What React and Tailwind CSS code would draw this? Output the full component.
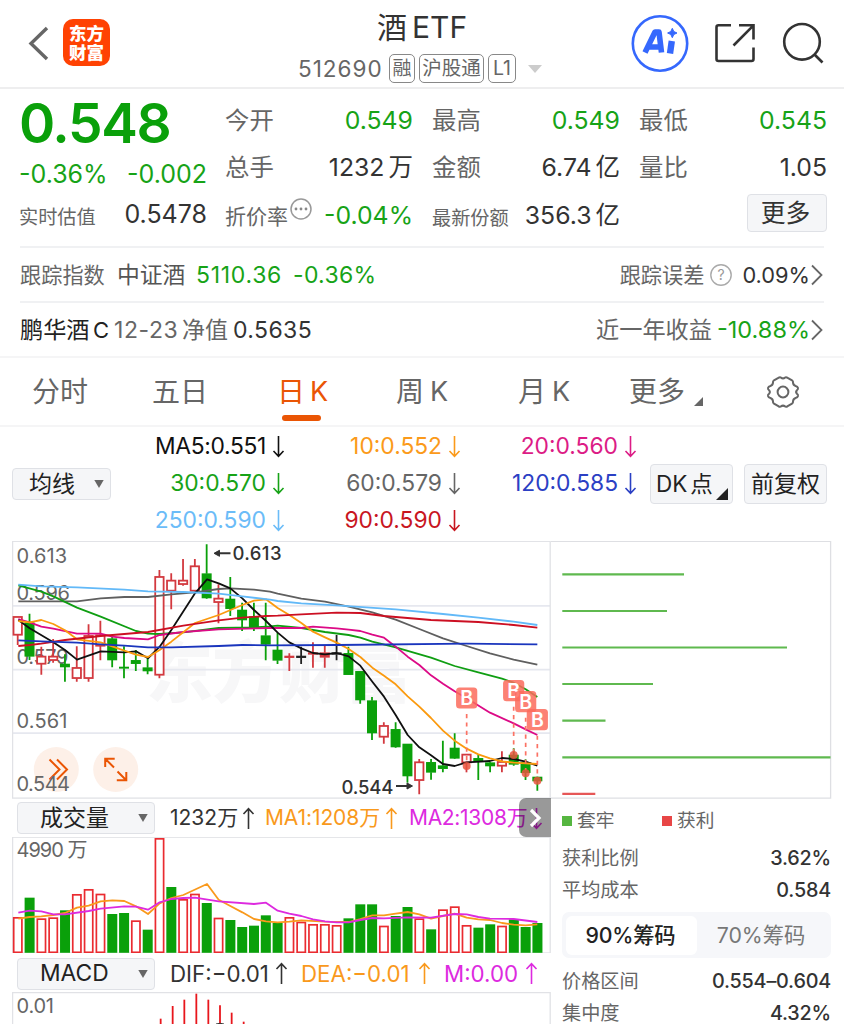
import React from "react";

const GREEN = "#0aa00a";
const RED = "#d3393f";

// i-th candle centre
const cx = (i) => 17.7 + 11.81 * i;
// chart coordinates are recorded on a 3x grid
const py = (v) => 535 + v / 3;
const vy = (v) => 795 + v / 3;

// [kind, high, bodyTop, bodyBottom, low]
const CANDLES = [
  ["r", 245, 245, 300, 330], ["g", 236, 263, 364, 375], ["r", 335, 364, 387, 419],
  ["r", 312, 364, 376, 383], ["g", 358, 387, 396, 440], ["r", 334, 398, 430, 440],
  ["r", 268, 302, 430, 440], ["r", 257, 300, 333, 376], ["g", 305, 311, 375, 397],
  ["g", 334, 396, 400, 430], ["g", 345, 376, 386, 408], ["g", 370, 398, 408, 418],
  ["r", 105, 125, 420, 430], ["r", 115, 136, 168, 223], ["r", 72, 136, 148, 152],
  ["r", 72, 93, 168, 170], ["g", 28, 116, 189, 191], ["r", 148, 190, 202, 265],
  ["g", 126, 192, 221, 243], ["g", 203, 225, 255, 288], ["g", 203, 245, 277, 288],
  ["g", 203, 302, 328, 376], ["g", 293, 345, 376, 387], ["c", 355, 363, 368, 408],
  ["k", 335, 363, 368, 387], ["c", 322, 353, 358, 398], ["c", 333, 353, 367, 398],
  ["k", 300, 353, 358, 376], ["g", 335, 355, 419, 420], ["g", 408, 409, 495, 506],
  ["g", 486, 497, 594, 615], ["r", 562, 572, 606, 626], ["g", 562, 583, 636, 638],
  ["g", 627, 627, 723, 743], ["r", 672, 681, 736, 778], ["g", 672, 682, 712, 734],
  ["g", 617, 692, 701, 712], ["g", 595, 639, 670, 672], ["r", 658, 658, 683, 712],
  ["g", 660, 670, 680, 735], ["g", 680, 683, 693, 712], ["r", 649, 680, 693, 712],
  ["g", 640, 660, 688, 692], ["g", 673, 682, 713, 735], ["g", 725, 726, 738, 767],
];

// Each line: points of the left part, then points of the right part (offset 270px)
const LINES = [
  ["#5f5f5f", [[55,199],[231,199],[302,190],[373,186],[444,186],[514,178],[585,172],[656,162],[691,160],[762,164],[810,170]], [[23,176],[94,191],[165,200],[236,215],[307,232],[377,254],[448,282],[519,310],[590,333],[660,355],[731,374],[802,389]]],
  ["#0f9e12", [[55,151],[124,170],[160,184],[231,218],[302,245],[408,288],[444,296],[479,297],[550,292],[656,279],[762,277],[810,274]], [[23,272],[94,279],[165,291],[236,300],[271,308],[307,320],[377,337],[483,368],[554,393],[625,412],[696,431],[731,443],[767,463],[802,486]]],
  ["#dc0a86", [[55,252],[89,262],[124,275],[160,281],[231,296],[302,296],[337,305],[373,309],[444,313],[479,300],[550,291],[656,283],[810,279]], [[94,279],[129,275],[200,280],[236,284],[271,288],[307,299],[342,308],[377,335],[413,365],[448,390],[483,421],[519,446],[554,469],[590,490],[660,533],[731,565],[767,583],[802,600]]],
  ["#101010", [[55,255],[89,280],[160,322],[195,345],[231,374],[302,349],[373,352],[408,349],[444,370],[479,335],[514,285],[585,175],[621,133],[656,145],[691,160],[727,190],[762,225],[798,258]], [[23,293],[58,322],[94,340],[129,354],[165,358],[200,354],[236,364],[271,392],[307,440],[342,485],[377,540],[413,600],[448,637],[483,661],[519,687],[554,693],[590,682],[660,678],[696,669],[731,672],[767,680],[802,692]]],
  ["#fb9a0e", [[55,258],[89,262],[124,255],[160,267],[195,286],[231,313],[302,322],[373,347],[408,359],[444,366],[479,345],[514,320],[585,264],[656,240],[727,210],[762,197],[798,193]], [[23,219],[58,240],[94,264],[129,290],[165,307],[200,323],[236,342],[271,366],[307,398],[342,422],[377,448],[413,484],[448,515],[483,549],[519,587],[554,617],[590,641],[625,658],[660,670],[696,679],[731,683],[802,687]]],
  ["#cc0f22", [[55,333],[89,330],[124,326],[195,315],[302,303],[444,291],[550,272],[656,256],[727,248],[798,243]], [[23,242],[94,238],[200,233],[271,234],[342,243],[483,255],[625,261],[731,270],[802,278]]],
  ["#1a35bd", [[55,316],[124,319],[231,323],[302,328],[373,332],[444,337],[514,337],[656,333],[727,330],[810,331]], [[200,330],[590,326],[802,328]]],
  ["#62b9f8", [[55,149],[124,154],[231,157],[373,164],[444,169],[550,171],[656,176],[727,184],[810,194]], [[23,198],[94,205],[200,211],[377,223],[519,237],[625,248],[731,260],[802,270]]],
];

const VOLS = "r367 g308 r371 r368 g346 r298 r283 r297 g357 g354 r377 g404 r130 g276 r313 r297 g324 r369 g375 g396 g392 g361 g384 r367 r381 r388 r388 r391 g370 g328 g328 r393 g363 g336 r371 g403 r344 r335 r391 g398 g388 r393 g373 g396 g384".split(" ");

const VOL_LINES = [
  ["#f9991c", [[55,371],[89,366],[124,364],[160,360],[195,354],[231,338],[266,332],[302,319],[337,316],[373,318],[408,334],[444,357],[479,325],[514,309],[550,300],[621,267],[656,314],[691,333],[727,352],[762,372],[798,379]], [[23,382],[58,380],[94,376],[165,380],[236,381],[271,372],[307,361],[342,361],[377,356],[413,351],[448,358],[483,371],[519,363],[554,356],[590,368],[625,373],[660,375],[696,384],[731,389],[767,391],[802,388]]],
  ["#dd2adf", [[55,353],[89,347],[124,349],[160,358],[195,358],[266,348],[302,341],[373,334],[408,335],[444,344],[479,322],[514,312],[550,309],[585,308],[656,319],[762,327],[798,323]], [[23,347],[58,356],[94,363],[129,373],[165,379],[200,382],[236,382],[271,375],[307,369],[342,370],[413,367],[483,368],[554,357],[590,358],[625,366],[660,371],[731,372],[802,381]]],
];

const MACD_BARS = [[482, 671], [518, 633], [553, 614], [589, 596], [625, 614], [660, 631], [695, 653], [731, 680]];
const BUYS = [[590, 489, 693], [731, 467, 660], [767, 500, 715], [802, 554, 737]];

const toPoints = (a, b, y) =>
  [...a.map(([x, v]) => [x / 3, y(v)]), ...b.map(([x, v]) => [270 + x / 3, y(v)])]
    .map((p) => p.join(","))
    .join(" ");

function Arrow({ up = false, className = "" }) {
  return (
    <svg width="13" height="23" viewBox="0 0 13 23" className={`shrink-0 ${className}`} fill="none" stroke="currentColor" strokeWidth="1.6">
      <path d={up ? "M6.5 22V1.5M1.5 7l5-5.3 5 5.3" : "M6.5 1v20.5M1.5 16l5 5.3 5-5.3"} />
    </svg>
  );
}

function Chevron() {
  return (
    <svg width="14" height="22" viewBox="0 0 14 22" className="shrink-0" fill="none" stroke="#666" strokeWidth="1.8">
      <path d="M2 1.5l9.5 9.5L2 20.5" />
    </svg>
  );
}

function Caret({ className = "" }) {
  return (
    <svg width="10" height="8" viewBox="0 0 10 8" className={className}>
      <path d="M0.3 0h9.4L5 8z" fill="#666" />
    </svg>
  );
}

function Header() {
  return (
    <header className="flex h-[89px] items-start border-b-2 border-[#eeeeef]">
      <svg width="24" height="38" viewBox="0 0 24 38" className="ml-[26px] mt-[24px] shrink-0" fill="none" stroke="#666" strokeWidth="3.4">
        <path d="M21 4L5 19.5 21 35" />
      </svg>
      <div className="ml-[13px] mt-[19px] flex h-[47px] w-[47px] shrink-0 flex-col items-center justify-center rounded-[10px] bg-[#ff4203] text-[17.5px] font-black leading-[19px] text-white">
        <span>东方</span>
        <span>财富</span>
      </div>
      <div className="ml-[188px] flex w-[246px] shrink-0 flex-col">
        <div className="mt-[7px] flex h-[40px] items-center pl-[79px] text-[30px] leading-[40px] text-[#333]">
          <span>酒</span>
          <span className="ml-[5px]">ETF</span>
        </div>
        <div className="mt-[7px] flex h-[29px] items-center text-[#666]">
          <span className="w-[91px] text-[22.5px] leading-[29px] tracking-[1px]">512690</span>
          <span className="flex h-[29px] w-[26px] items-center justify-center rounded-[5px] border-[1.5px] border-[#888] text-[19px] leading-none">融</span>
          <span className="ml-[4px] flex h-[29px] w-[65px] items-center justify-center whitespace-nowrap rounded-[5px] border-[1.5px] border-[#888] text-[19.5px] leading-none">沪股通</span>
          <span className="ml-[4px] flex h-[29px] w-[28px] items-center justify-center rounded-[5px] border-[1.5px] border-[#888] text-[19.5px] leading-none">L1</span>
          <svg width="14" height="8" viewBox="0 0 14 8" className="ml-[12px]">
            <path d="M0 0h14L7 8z" fill="#ccc" />
          </svg>
        </div>
      </div>
      <svg width="58" height="58" viewBox="0 0 58 58" className="ml-[87px] mt-[14px] shrink-0">
        <circle cx="29" cy="29.5" r="27.2" fill="none" stroke="#3568fd" strokeWidth="2.6" />
        <g fill="none" stroke="#3568fd" strokeLinejoin="round">
          <path d="M14 38.5L24 18h4l2.5 20.5M18 33h11" strokeWidth="5.6" />
          <path d="M40.8 27l-1.8 12.5" strokeWidth="6.4" />
        </g>
        <path d="M41.3 14.3l1.5 3.2 3.2 1.5-3.2 1.5-1.5 3.2-1.5-3.2-3.2-1.5 3.2-1.5z" fill="#3568fd" stroke="#3568fd" />
      </svg>
      <svg width="42" height="42" viewBox="0 0 42 42" className="ml-[25px] mt-[22px] shrink-0" fill="none" stroke="#333" strokeWidth="2.6">
        <path d="M17 3.3H4.5a2 2 0 0 0-2 2V37a2 2 0 0 0 2 2h33a2 2 0 0 0 2-2V25.5" />
        <path d="M25 3.3h14.5v14.2M39 3.8L19.5 23.5" />
      </svg>
      <svg width="44" height="44" viewBox="0 0 44 44" className="ml-[25px] mt-[21px] shrink-0" fill="none" stroke="#333" strokeWidth="2.6">
        <circle cx="21" cy="20.8" r="17.8" />
        <path d="M33.5 33.5l8 8" />
      </svg>
    </header>
  );
}

function Cell({ label, value, unit, valueClass = "text-[#333]", labelClass = "text-[24.4px]", extra }) {
  return (
    <div className="flex items-center justify-between whitespace-nowrap leading-[30px]">
      <span className={`flex text-[#666] ${labelClass}`}>
        {label}
        {extra}
      </span>
      <span className={`flex gap-[4px] text-[24.8px] ${valueClass}`}>
        {value}
        {unit && <span className="text-[24.5px]">{unit}</span>}
      </span>
    </div>
  );
}

function Quote() {
  return (
    <section className="ml-[19px] flex h-[157px] w-[808px]">
      <div className="w-[188px] shrink-0 whitespace-nowrap">
        <div className="h-[68px] text-[55px] font-semibold leading-[68px] tracking-[-1.4px] text-[#0aa00a]">0.548</div>
        <div className="flex h-[34px] justify-between text-[25px] leading-[34px] text-[#17a317]">
          <span>-0.36%</span>
          <span>-0.002</span>
        </div>
        <div className="flex h-[47px] items-center justify-between">
          <span className="pt-[5px] text-[19.2px] text-[#666]">实时估值</span>
          <span className="text-[25px] text-[#333]">0.5478</span>
        </div>
      </div>
      <div className="ml-[18px] grid h-[150px] grow grid-cols-[188px_188px_188px] grid-rows-3 gap-x-[19px] pt-[7px]">
        <Cell label="今开" value="0.549" valueClass="text-[#17a317]" />
        <Cell label="最高" value="0.549" valueClass="text-[#17a317]" />
        <Cell label="最低" value="0.545" valueClass="text-[#17a317]" />
        <Cell label="总手" value="1232" unit="万" />
        <Cell label="金额" value="6.74" unit="亿" />
        <Cell label="量比" value="1.05" />
        <Cell
          label="折价率"
          labelClass="text-[21px] pt-[3px]"
          value="-0.04%"
          valueClass="text-[#17a317]"
          extra={
            <svg width="22" height="22" viewBox="0 0 22 22" className="mt-[-4px] ml-[2px]">
              <circle cx="11" cy="11" r="10" fill="none" stroke="#999" strokeWidth="1.5" />
              <g fill="#888">
                <circle cx="6" cy="11" r="1.4" />
                <circle cx="11" cy="11" r="1.4" />
                <circle cx="16" cy="11" r="1.4" />
              </g>
            </svg>
          }
        />
        <Cell label="最新份额" labelClass="text-[19.2px] pt-[5px]" value="356.3" unit="亿" />
        <div className="flex items-center justify-end">
          <button className="mt-[-4px] h-[38px] w-[80px] rounded-[4px] border-[1.5px] border-[#dfe1e6] bg-[#f5f6f8] pr-[3px] text-[24.8px] leading-none text-[#333]">更多</button>
        </div>
      </div>
    </section>
  );
}

function InfoRows() {
  return (
    <>
      <div className="ml-[20px] flex h-[57px] w-[804px] items-center whitespace-nowrap border-y-2 border-[#f0f1f3] text-[23px] leading-[30px]">
        <span className="w-[97px] text-[21.2px] text-[#666]">跟踪指数</span>
        <span className="w-[79px] text-[22.8px] text-[#555]">中证酒</span>
        <span className="w-[97px] tracking-[0.7px] text-[#17a317]">5110.36</span>
        <span className="tracking-[0.3px] text-[#17a317]">-0.36%</span>
        <span className="ml-auto text-[21.2px] text-[#666]">跟踪误差</span>
        <svg width="24" height="24" viewBox="0 0 24 24" className="ml-[5px]">
          <circle cx="12" cy="12" r="10.2" fill="none" stroke="#aaa" strokeWidth="1.4" />
          <text x="12" y="17" textAnchor="middle" fontSize="14" fill="#999" fontFamily="Inter">?</text>
        </svg>
        <span className="ml-[9px] text-[21.8px] text-[#333]">0.09%</span>
        <Chevron />
      </div>
      <div className="ml-[20px] flex h-[53px] w-[804px] items-center whitespace-nowrap text-[23px] leading-[30px]">
        <span className="w-[73px] text-[23.2px] text-[#222]">鹏华酒</span>
        <span className="w-[21px] text-[22px] text-[#222]">C</span>
        <span className="w-[68px] tracking-[0.6px] text-[#666]">12-23</span>
        <span className="w-[51px] text-[23px] text-[#666]">净值</span>
        <span className="tracking-[0.4px] text-[#333]">0.5635</span>
        <span className="ml-auto text-[23.2px] text-[#666]">近一年收益</span>
        <span className="ml-[5px] text-[23.5px] text-[#17a317]">-10.88%</span>
        <Chevron />
      </div>
    </>
  );
}

function Tabs() {
  const base = "flex items-center gap-[6px] whitespace-nowrap";
  return (
    <nav className="flex h-[71px] items-center border-y-2 border-[#f5f5f6] text-[28px] leading-[40px] text-[#666]">
      <span className={`${base} ml-[32px] w-[120px]`}>分时</span>
      <span className={`${base} w-[125px]`}>五日</span>
      <span className="relative flex w-[119px] items-center gap-[5px] text-[#ea5504]">
        日<span className="text-[27px]">K</span>
        <i className="absolute left-[5px] top-[43px] h-[6px] w-[39px] rounded-[3px] bg-[#ea5504]" />
      </span>
      <span className={`${base} w-[122px]`}>周<span className="text-[27px]">K</span></span>
      <span className={`${base} w-[111px]`}>月<span className="text-[27px]">K</span></span>
      <span className={`${base} w-[137px]`}>
        更多
        <svg width="9" height="9" viewBox="0 0 9 9" className="ml-[3px] mt-[19px]"><path d="M9 0v9H0z" fill="#666" /></svg>
      </span>
      <svg width="34" height="34" viewBox="0 0 34 34" fill="none" stroke="#666" strokeWidth="2">
        <path d="M12.3 2.9Q14 1.6 15 2.6Q17 4.2 19 2.6Q20 1.6 21.7 2.9L26 5.3Q27.3 6.2 27 7.6Q27.2 10.2 29.6 11Q31.6 11.4 32 13Q32.2 14.4 31 15.2Q29.2 17 31 18.8Q32.2 19.6 32 21Q31.6 22.6 29.6 23Q27.2 23.8 27 26.4Q27.3 27.8 26 28.7L21.7 31.1Q20 32.4 19 31.4Q17 29.8 15 31.4Q14 32.4 12.3 31.1L8 28.7Q6.7 27.8 7 26.4Q6.8 23.8 4.4 23Q2.4 22.6 2 21Q1.8 19.6 3 18.8Q4.8 17 3 15.2Q1.8 14.4 2 13Q2.4 11.4 4.4 11Q6.8 10.2 7 7.6Q6.7 6.2 8 5.3Z" />
        <circle cx="17" cy="17" r="5.4" />
      </svg>
    </nav>
  );
}

function Ma({ children, className }) {
  return (
    <div className={`flex items-center justify-end gap-[6px] ${className}`}>
      <span>{children}</span>
      <Arrow />
    </div>
  );
}

function MaBar() {
  return (
    <section className="flex h-[114px] items-start whitespace-nowrap">
      <button className="ml-[12px] mt-[41px] flex h-[32px] w-[99px] shrink-0 items-center rounded-[4px] border-[1.5px] border-[#dfe1e6] bg-[#f5f6f8] pl-[16px] text-[23px] leading-none text-[#222]">
        均线
        <Caret className="ml-[19px]" />
      </button>
      <div className="grid h-[112px] w-[526px] shrink-0 grid-cols-[174px_176px_176px] grid-rows-3 pt-[1px] text-[22.8px]">
        <Ma className="tracking-[-0.3px] text-[#111]">MA5:0.551</Ma>
        <Ma className="text-[#fb9a1a]">10:0.552</Ma>
        <Ma className="text-[#dc1c86]">20:0.560</Ma>
        <Ma className="text-[#17a317]">30:0.570</Ma>
        <Ma className="text-[#666]">60:0.579</Ma>
        <Ma className="text-[#2b40c4]">120:0.585</Ma>
        <Ma className="text-[#6bbcf8]">250:0.590</Ma>
        <Ma className="text-[#c8161f]">90:0.590</Ma>
      </div>
      <button className="relative ml-[13px] mt-[37px] flex h-[40px] w-[83px] shrink-0 items-center rounded-[4px] border-[1.5px] border-[#dfe1e6] bg-[#f5f6f8] pl-[5px] text-[22.5px] leading-none text-[#222]">
        DK<span className="ml-[3px]">点</span>
        <svg width="12" height="12" viewBox="0 0 12 12" className="absolute bottom-[3px] right-[4px]"><path d="M12 0v12H0z" fill="#222" /></svg>
      </button>
      <button className="ml-[11px] mt-[37px] flex h-[40px] w-[83px] shrink-0 items-center justify-center rounded-[4px] border-[1.5px] border-[#dfe1e6] bg-[#f5f6f8] text-[23px] leading-none text-[#222]">
        前复权
      </button>
    </section>
  );
}

function Candle({ i, d }) {
  const [kind, h, t, b, l] = d;
  const x = cx(i);
  const hollow = kind === "r";
  const color = kind === "g" ? GREEN : kind === "k" ? "#222" : RED;
  return (
    <g stroke={color} strokeWidth="1.8">
      <path d={`M${x} ${py(h)}V${py(t)}M${x} ${py(b)}V${py(l)}`} />
      {hollow ? (
        <rect x={x - 4.2} y={py(t) + 0.3} width="8.4" height={Math.max(2, (b - t) / 3 - 0.6)} fill="#fff" />
      ) : (
        <rect x={x - 5} y={py(t) - 0.3} width="10" height={(b - t) / 3 + 0.6} fill={color} stroke="none" />
      )}
    </g>
  );
}

function PriceChart() {
  return (
    <svg width="539" height="258" viewBox="12 541 539 258" className="block" fontFamily="Inter, 'Noto Sans CJK SC', sans-serif">
      <text x="146" y="697" fontSize="67" fontWeight="900" fill="#f7f7f8" textLength="266">东方财富</text>
      <g stroke="#e6e8ef" strokeWidth="1.8">
        <path d="M12 605.8H550M12 669.6H550M12 733.2H550" />
        <rect x="12.6" y="541.3" width="537.6" height="256.8" fill="none" stroke="#e1e2e6" strokeWidth="1.3" />
      </g>
      <circle cx="56.3" cy="769.5" r="22.5" fill="#fdf0e8" />
      <circle cx="115.7" cy="769.5" r="22.5" fill="#fdf0e8" />
      <g fill="none" stroke="#ea5504" strokeWidth="2">
        <path d="M49.5 759.5l10 10-10 10M57 759.5l10 10-10 10" />
        <path d="M114 767.5l-8.5-8.5M105.2 767v-8.2h9.5M117.5 771.5l8.5 8.5M126.3 772v8.2h-9.5" />
      </g>
      <g fontSize="20" fill="#666">
        <text x="16.5" y="562.5" textLength="50.5">0.613</text>
        <text x="16.5" y="599.5" textLength="53.5">0.596</text>
        <text x="16.5" y="663.5" textLength="52">0.579</text>
        <text x="16.5" y="727.5" textLength="51">0.561</text>
        <text x="16.5" y="791.3" textLength="53.5">0.544</text>
      </g>
      {CANDLES.map((d, i) => <Candle key={i} i={i} d={d} />)}
      {LINES.map(([c, a, b]) => (
        <polyline key={c} points={toPoints(a, b, py)} fill="none" stroke={c} strokeWidth="1.8" strokeLinejoin="round" />
      ))}
      {BUYS.map(([x, y, dot]) => {
        const X = 270 + x / 3;
        return (
          <g key={x}>
            <path d={`M${X} ${py(y) + 16}V${py(dot) - 3}`} stroke="#fb7264" strokeWidth="1.7" strokeDasharray="4.2 4.2" />
            <circle cx={X} cy={py(dot)} r="4" fill="#e9553e" fillOpacity=".85" />
            <rect x={X - 10.6} y={py(y) - 10.6} width="21.2" height="21.2" rx="3.5" fill="#fc6b5c" fillOpacity=".85" />
            <text x={X} y={py(y) + 7} textAnchor="middle" fontSize="19.5" fontWeight="600" fill="#fff">B</text>
          </g>
        );
      })}
      <g fontSize="18.5" fontWeight="500" fill="#333">
        <text x="232.5" y="560" textLength="49">0.613</text>
        <text x="341.5" y="793.5" textLength="52">0.544</text>
      </g>
      <g stroke="#333" strokeWidth="2" fill="#333">
        <path d="M216 553.3h14.5M396 786h14" />
        <path d="M214 553.3l5.5-3v6zM412.5 786l-5.5-3v6z" strokeWidth="1" />
      </g>
    </svg>
  );
}

function Picker({ children, className }) {
  return (
    <button className={`ml-[5px] flex h-[32px] w-[138px] shrink-0 items-center rounded-[4px] border-[1.5px] border-[#dfe1e6] bg-[#f5f6f8] pl-[22px] leading-none text-[#222] ${className}`}>
      <span className="w-[98px] text-left">{children}</span>
      <Caret />
    </button>
  );
}

function VolumeChart() {
  return (
    <svg width="539" height="116" viewBox="12 837 539 116" className="block" fontFamily="Inter, 'Noto Sans CJK SC', sans-serif">
      <rect x="12.6" y="837.2" width="537.6" height="115.8" fill="none" stroke="#e1e2e6" strokeWidth="1.3" />
      <text x="16.5" y="857" fontSize="20" fill="#666" textLength="71">4990 万</text>
      {VOLS.map((v, i) => {
        const t = vy(+v.slice(1));
        return v[0] === "g" ? (
          <rect key={i} x={cx(i) - 4.9} y={t} width="10" height={952.8 - t} fill={GREEN} />
        ) : (
          <rect key={i} x={cx(i) - 4} y={t + 0.5} width="8.2" height={951.8 - t} fill="#fff" stroke="#ea2b30" strokeWidth="1.7" />
        );
      })}
      {VOL_LINES.map(([c, a, b]) => (
        <polyline key={c} points={toPoints(a, b, vy)} fill="none" stroke={c} strokeWidth="1.8" strokeLinejoin="round" />
      ))}
    </svg>
  );
}

function MacdChart() {
  return (
    <svg width="539" height="32" viewBox="12 992 539 32" className="block" fontFamily="Inter, sans-serif">
      <path d="M12.6 1024V992.5H550.2V1024" fill="none" stroke="#e1e2e6" strokeWidth="1.3" />
      <text x="16.5" y="1012.5" fontSize="20" fill="#666" textLength="37.5">0.01</text>
      {MACD_BARS.map(([x, t]) => (
        <path key={x} d={`M${x / 3} ${vy(t)}V1024`} stroke="#e8161c" strokeWidth="1.8" />
      ))}
      <path d="M216 1024q4-1.4 8 0" fill="none" stroke="#333" strokeWidth="1" />
    </svg>
  );
}

function Distribution() {
  const bars = [[574.3, 684], [611, 667], [647.5, 787], [684, 653], [720.6, 605.5], [757.3, 830.5]];
  return (
    <svg width="281" height="258" viewBox="551 541 281 258" className="block">
      <path d="M551 541.3H830.6V798.1H551" fill="none" stroke="#dedfe3" strokeWidth="1.3" />
      {bars.map(([y, x]) => <path key={y} d={`M562.3 ${y}H${x}`} stroke="#5fb94f" strokeWidth="2.2" />)}
      <path d="M562.3 793.8H595.3" stroke="#e65757" strokeWidth="2.2" />
    </svg>
  );
}

function Stat({ label, value, className = "h-[32px]" }) {
  return (
    <div className={`flex items-center justify-between whitespace-nowrap ${className}`}>
      <span className="text-[19.2px] text-[#666]">{label}</span>
      <span className="text-[19.8px] font-medium tracking-[-0.2px] text-[#333]">{value}</span>
    </div>
  );
}

function ChipPanel() {
  return (
    <aside className="w-[281px] shrink-0">
      <Distribution />
      <div className="ml-[11px] w-[269px] leading-[30px]">
        <div className="flex h-[43px] items-center text-[18.7px] text-[#666]">
          <i className="mr-[5px] mt-[1px] h-[10px] w-[10px] bg-[#56b640]" />
          <span className="w-[85px]">套牢</span>
          <i className="mr-[5px] mt-[1px] h-[10px] w-[10px] bg-[#e84646]" />
          <span>获利</span>
        </div>
        <Stat label="获利比例" value="3.62%" />
        <Stat label="平均成本" value="0.584" />
        <div className="mb-[7px] mt-[6px] flex h-[46px] items-center rounded-[7px] bg-[#f6f7fa] p-[4px] text-[21.3px]">
          <span className="flex h-[39px] w-[131px] items-center justify-center whitespace-nowrap rounded-[6px] bg-white pr-[2px] font-medium tracking-[-0.2px] text-[#222]">90%筹码</span>
          <span className="grow whitespace-nowrap pr-[2px] text-center text-[#777]">70%筹码</span>
        </div>
        <Stat label="价格区间" value="0.554–0.604" />
        <Stat label="集中度" value="4.32%" className="h-[31px]" />
      </div>
    </aside>
  );
}

export default function App() {
  return (
    <main className="h-[1024px] w-[844px] overflow-hidden bg-white font-['Inter','Noto_Sans_CJK_SC',sans-serif]">
      <Header />
      <Quote />
      <InfoRows />
      <Tabs />
      <MaBar />
      <div className="ml-[12px] flex">
        <div className="w-[539px] shrink-0">
          <PriceChart />
          <div className="relative flex h-[38px] items-center whitespace-nowrap text-[21px] text-[#333]">
            <Picker className="text-[23px]">成交量</Picker>
            <span className="ml-[15px] w-[72px]">1232万</span>
            <Arrow up />
            <span className="ml-[10px] w-[120px] tracking-[-0.1px] text-[#f9991c]">MA1:1208万</span>
            <Arrow up className="text-[#f9991c]" />
            <span className="ml-[11px] w-[121px] tracking-[-0.3px] text-[#dd2adf]">MA2:1308万</span>
            <Arrow className="text-[#dd2adf]" />
            <div className="absolute right-0 top-[-1px] flex h-[39px] w-[32px] items-center justify-center rounded-l-[7px] bg-black/40">
              <svg width="14" height="20" viewBox="0 0 14 20" fill="none" stroke="#fff" strokeWidth="3.2"><path d="M3 2l8 8-8 8" /></svg>
            </div>
          </div>
          <VolumeChart />
          <div className="flex h-[39px] items-center whitespace-nowrap pt-[2px] text-[22.3px] text-[#333]">
            <Picker className="text-[22.8px]">MACD</Picker>
            <span className="ml-[15px] w-[105px]">DIF:−0.01</span>
            <Arrow up />
            <span className="ml-[13px] w-[117px] text-[#f9991c]">DEA:−0.01</span>
            <Arrow up className="text-[#f9991c]" />
            <span className="ml-[13px] w-[81px] text-[#dd2adf]">M:0.00</span>
            <Arrow up className="text-[#dd2adf]" />
          </div>
          <MacdChart />
        </div>
        <ChipPanel />
      </div>
    </main>
  );
}
